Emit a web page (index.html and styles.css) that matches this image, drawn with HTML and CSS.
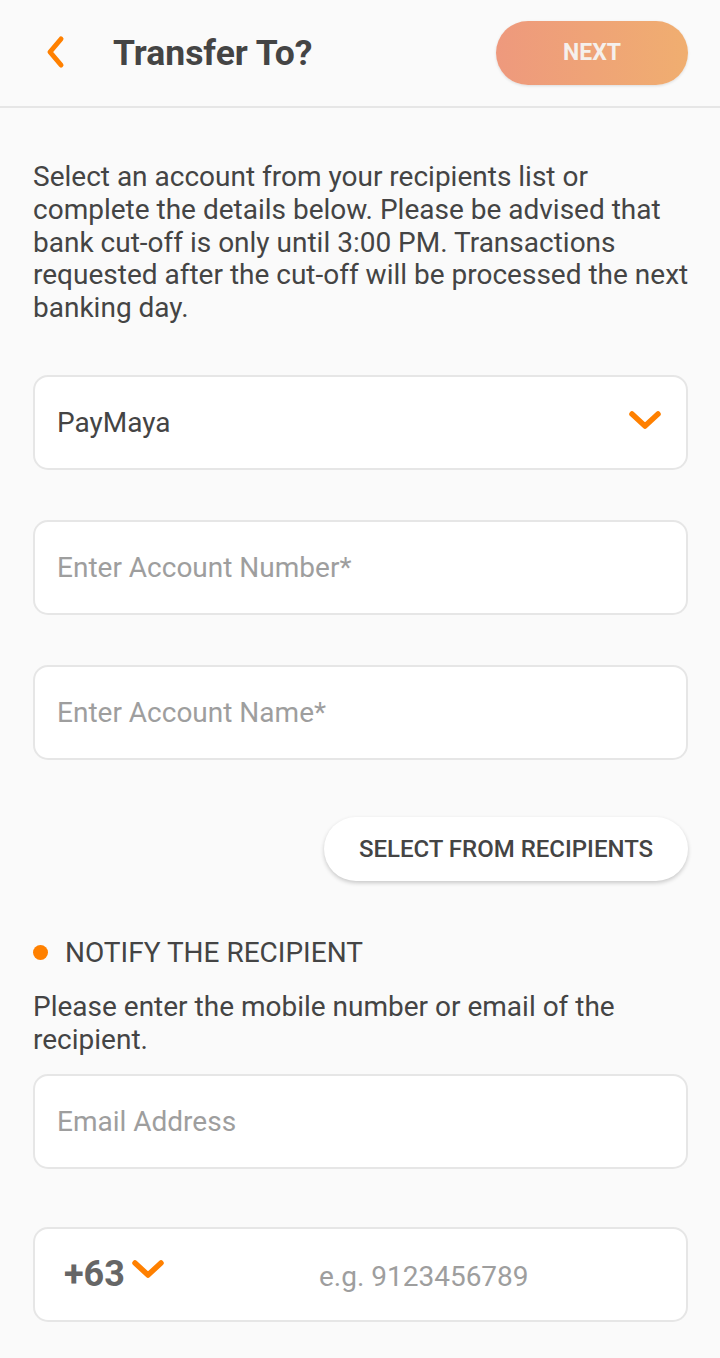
FILE: index.html
```html
<!DOCTYPE html>
<html>
<head>
<meta charset="utf-8">
<link rel="stylesheet" href="styles.css">
</head>
<body>
<header class="topbar">
  <div class="back">
    <svg width="22" height="34" viewBox="0 0 22 34"><path d="M17 4 L6 17 L17 30" fill="none" stroke="#ff8000" stroke-width="5" stroke-linecap="round" stroke-linejoin="round"/></svg>
  </div>
  <h1 class="title">Transfer To?</h1>
  <button class="next">NEXT</button>
</header>
<main class="content">
  <p class="intro">Select an account from your recipients list or complete the details below. Please be advised that bank cut-off is only until 3:00 PM. Transactions requested after the cut-off will be processed the next banking day.</p>
  <div class="field select">
    <span class="value">PayMaya</span>
    <svg class="chev" width="34" height="22" viewBox="0 0 34 22"><path d="M4 5 L17 17 L30 5" fill="none" stroke="#ff8000" stroke-width="5.5" stroke-linecap="round" stroke-linejoin="round"/></svg>
  </div>
  <div class="field"><span class="ph">Enter Account Number*</span></div>
  <div class="field"><span class="ph">Enter Account Name*</span></div>
  <div class="btnrow"><button class="pill">SELECT FROM RECIPIENTS</button></div>
  <div class="notify"><span class="dot"></span><span>NOTIFY THE RECIPIENT</span></div>
  <p class="sub">Please enter the mobile number or email of the recipient.</p>
  <div class="field"><span class="ph">Email Address</span></div>
  <div class="field phone">
    <span class="code">+63</span>
    <svg class="chev2" width="34" height="22" viewBox="0 0 34 22"><path d="M4 5 L17 17 L30 5" fill="none" stroke="#ff8000" stroke-width="5.5" stroke-linecap="round" stroke-linejoin="round"/></svg>
    <span class="ph num">e.g. 9123456789</span>
  </div>
</main>
</body>
</html>
```
FILE: styles.css
```css
* { box-sizing: border-box; }
html, body { margin: 0; padding: 0; background: #fafafa; }
body { font-family: Roboto, "Liberation Sans", sans-serif; color: #444; width: 720px; }
.topbar {
  height: 108px;
  border-bottom: 2px solid #e6e6e6;
  display: flex;
  align-items: center;
  padding: 0 32px 0 44px;
}
.back { width: 22px; height: 34px; display: flex; margin-top: -2px; }
.title {
  margin: 0 0 0 47px;
  font-size: 35.5px;
  font-weight: 700;
  color: #444;
  flex: 1;
}
.next {
  width: 192px; height: 64px;
  border: none; border-radius: 32px;
  background: linear-gradient(90deg, #ee997d, #f0ae70);
  color: #f5f0ec;
  font-family: inherit; font-size: 23px; font-weight: 700;
  box-shadow: 0 1px 3px rgba(0,0,0,0.12);
  margin-top: -1px;
}
.content { padding: 53px 32px 0 33px; }
.intro {
  margin: 0 -8px 50px 0;
  font-size: 28px;
  line-height: 32.8px;
  color: #444;
}
.field {
  height: 95px;
  background: #fff;
  border: 2px solid #e6e6e6;
  border-radius: 15px;
  display: flex;
  align-items: center;
  padding: 0 22px;
  margin-bottom: 50px;
  font-size: 28px;
}
.field.select { justify-content: space-between; padding-right: 24px; }
.value { color: #444; }
.chev { margin-top: -4px; }
.ph { color: #9e9e9e; }
.btnrow { display: flex; justify-content: flex-end; margin-top: 57px; margin-bottom: 52px; }
.pill {
  width: 364px; height: 64px;
  border: none; border-radius: 32px;
  background: #fff;
  box-shadow: 0 2px 4px rgba(0,0,0,0.2);
  font-family: inherit; font-size: 24px; font-weight: 500;
  color: #444;
}
.notify { display: flex; align-items: center; font-size: 28px; color: #444; height: 40px; }
.dot { width: 15px; height: 15px; border-radius: 50%; background: #ff8000; margin-right: 17px; }
.sub { margin: 17px 0 18px; font-size: 28px; line-height: 33px; }
.phone { margin-top: 58px; padding-left: 29px; }
.code { font-size: 36px; font-weight: 700; color: #666; }
.chev2 { margin-left: 6px; margin-top: -10px; }
.num { margin-left: 154px; margin-top: 4px; }
```
